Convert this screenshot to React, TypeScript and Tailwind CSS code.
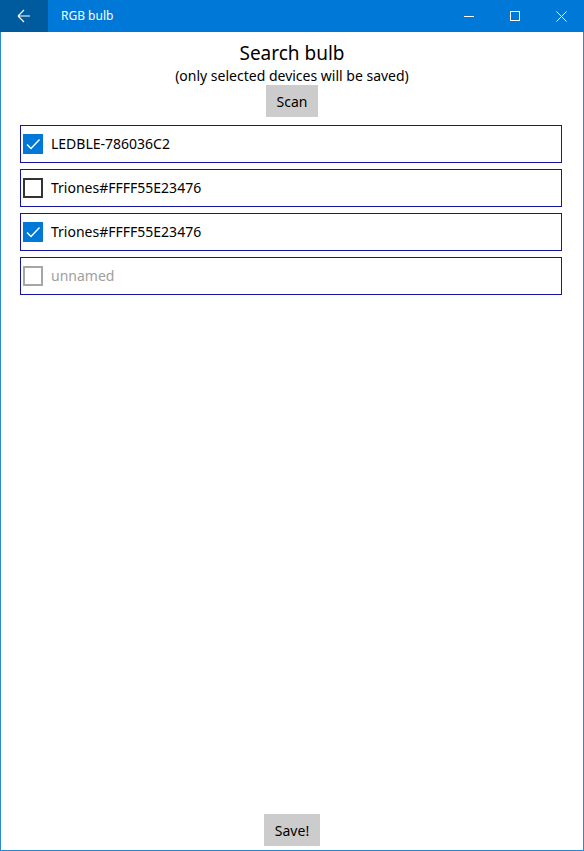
import React from 'react';

type Device = {
    name: string;
    checked: boolean;
    disabled?: boolean;
};

const DEVICES: Device[] = [
    { name: 'LEDBLE-786036C2', checked: true },
    { name: 'Triones#FFFF55E23476', checked: false },
    { name: 'Triones#FFFF55E23476', checked: true },
    { name: 'unnamed', checked: false, disabled: true },
];

const FONT = "font-['Segoe_UI','Noto_Sans','Open_Sans',sans-serif]";

function CheckBox({ checked, disabled }: { checked: boolean; disabled?: boolean }) {
    if (checked) {
        return (
            <span className="flex h-5 w-5 items-center justify-center bg-[#0078d7]">
                <svg width="16" height="16" viewBox="0 0 16 16" fill="none">
                    <path d="M2 8.5 L6 12.5 L14.5 3.5" stroke="white" strokeWidth="1.4" />
                </svg>
            </span>
        );
    }
    return (
        <span
            className={`block h-5 w-5 border-2 ${disabled ? 'border-[#a6a6a6]' : 'border-[#333333]'}`}
        />
    );
}

export default function App() {
    return (
        <div className={`flex h-[851px] w-[584px] flex-col bg-white ${FONT}`}>
            {/* Title bar */}
            <div className="flex h-8 shrink-0 items-center bg-[#0078d7] text-white">
                <div className="flex h-full w-12 items-center justify-center bg-[#005a9e]">
                    <svg width="14" height="14" viewBox="0 0 14 14" fill="none">
                        <path d="M1 7 H13 M1 7 L7 1 M1 7 L7 13" stroke="white" strokeWidth="1.1" />
                    </svg>
                </div>
                <span className="ml-[13px] text-[12px]">RGB bulb</span>
                <div className="ml-auto flex h-full">
                    <div className="flex h-full w-[46px] items-center justify-center">
                        <span className="block h-px w-[10px] bg-white" />
                    </div>
                    <div className="flex h-full w-[46px] items-center justify-center">
                        <span className="block h-[10px] w-[10px] border border-white" />
                    </div>
                    <div className="flex h-full w-[46px] items-center justify-center">
                        <svg width="11" height="11" viewBox="0 0 11 11" fill="none">
                            <path d="M0.5 0.5 L10.5 10.5 M10.5 0.5 L0.5 10.5" stroke="white" strokeWidth="1" />
                        </svg>
                    </div>
                </div>
            </div>

            {/* Content */}
            <div className="flex min-h-0 flex-1 flex-col border-x border-b border-[#2b88d8]">
                <main className="flex flex-1 flex-col items-center pt-[7px]">
                    <h1 className="text-[19px] leading-[28px] text-black">Search bulb</h1>
                    <p className="text-[14px] leading-[18px] text-black">
                        (only selected devices will be saved)
                    </p>
                    <button className="h-8 w-[52px] bg-[#cccccc] text-[14px] text-black">Scan</button>

                    <div className="mt-2 flex w-full flex-col gap-[6px] pl-[19px] pr-[21px]">
                        {DEVICES.map((d, i) => (
                            <div
                                key={i}
                                className="flex h-[38px] items-center gap-2 border border-[#1414a0] pl-[2px]"
                            >
                                <CheckBox checked={d.checked} disabled={d.disabled} />
                                <span
                                    className={`pb-[2px] text-[14px] ${d.disabled ? 'text-[#a0a0a0]' : 'text-black'}`}
                                >
                                    {d.name}
                                </span>
                            </div>
                        ))}
                    </div>
                </main>

                <div className="flex justify-center pb-[4px]">
                    <button className="h-8 w-14 bg-[#cccccc] text-[14px] text-black">Save!</button>
                </div>
            </div>
        </div>
    );
}
